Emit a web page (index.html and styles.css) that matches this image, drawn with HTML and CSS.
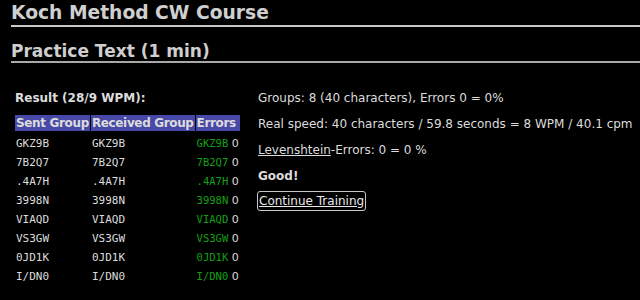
FILE: index.html
```html
<!DOCTYPE html>
<html>
<head>
<meta charset="utf-8">
<link rel="stylesheet" href="styles.css">
</head>
<body>
<div class="page">
  <h1 class="title">Koch Method CW Course</h1>
  <h2 class="subtitle">Practice Text (1 min)</h2>
  <div class="content">
    <div class="left">
      <p class="result">Result (28/9 WPM):</p>
      <table class="groups">
        <thead>
          <tr><th>Sent Group</th><th>Received Group</th><th>Errors</th></tr>
        </thead>
        <tbody>
          <tr class="first"><td class="code">GKZ9B</td><td class="code">GKZ9B</td><td class="err"><span class="ok">GKZ9B</span> 0</td></tr>
          <tr><td class="code">7B2Q7</td><td class="code">7B2Q7</td><td class="err"><span class="ok">7B2Q7</span> 0</td></tr>
          <tr><td class="code">.4A7H</td><td class="code">.4A7H</td><td class="err"><span class="ok">.4A7H</span> 0</td></tr>
          <tr><td class="code">3998N</td><td class="code">3998N</td><td class="err"><span class="ok">3998N</span> 0</td></tr>
          <tr><td class="code">VIAQD</td><td class="code">VIAQD</td><td class="err"><span class="ok">VIAQD</span> 0</td></tr>
          <tr><td class="code">VS3GW</td><td class="code">VS3GW</td><td class="err"><span class="ok">VS3GW</span> 0</td></tr>
          <tr><td class="code">0JD1K</td><td class="code">0JD1K</td><td class="err"><span class="ok">0JD1K</span> 0</td></tr>
          <tr><td class="code">I/DN0</td><td class="code">I/DN0</td><td class="err"><span class="ok">I/DN0</span> 0</td></tr>
        </tbody>
      </table>
    </div>
    <div class="right">
      <p class="line">Groups: 8 (40 characters), Errors 0 = 0%</p>
      <p class="line">Real speed: 40 characters / 59.8 seconds = 8 WPM / 40.1 cpm</p>
      <p class="line"><a class="link" href="#">Levenshtein</a>-Errors: 0 = 0 %</p>
      <p class="line good">Good!</p>
      <p class="line action"><a class="button" href="#">Continue Training</a></p>
    </div>
  </div>
</div>
</body>
</html>
```
FILE: styles.css
```css
html, body {
  margin: 0;
  padding: 0;
  background: #000;
}
body {
  color: #dcdcdc;
  font-family: "DejaVu Sans", Verdana, sans-serif;
  font-size: 12px;
}
.page {
  padding-left: 11px;
  padding-top: 3px;
}
.title {
  margin: 0;
  font-size: 18.7px;
  line-height: 20px;
  font-weight: bold;
  color: #cfcfcf;
  border-bottom: 2px solid #c8c8c8;
  padding-bottom: 2px;
}
.subtitle {
  margin: 14px 0 0 0;
  font-size: 17px;
  line-height: 20px;
  font-weight: bold;
  color: #cfcfcf;
  border-bottom: 2px solid #a8a8a8;
  padding-bottom: 0;
}
.content {
  display: flex;
  padding-top: 28px;
  padding-left: 4px;
}
.left {
  width: 243px;
  flex: none;
}
.result {
  margin: 0 0 10px 0;
  font-weight: bold;
  font-size: 12px;
  line-height: 14px;
}
.groups {
  border-collapse: separate;
  border-spacing: 1px 0;
  margin-left: -1px;
}
.groups th {
  background: #4848a8;
  color: #dcdcdc;
  font-weight: bold;
  font-size: 12px;
  letter-spacing: -0.35px;
  line-height: 16px;
  padding: 0 1px;
  text-align: left;
  white-space: nowrap;
}
.groups td {
  font-size: 11px;
  line-height: 18px;
  padding: 0 1px;
  height: 18px;
}
.groups .first td {
  padding-top: 3px;
}
.code {
  font-family: "DejaVu Sans Mono", "Liberation Mono", monospace;
}
.err {
  text-align: right;
  font-family: "DejaVu Sans", Verdana, sans-serif;
  font-size: 12px;
  white-space: nowrap;
}
.ok {
  color: #14a014;
  font-family: "DejaVu Sans Mono", "Liberation Mono", monospace;
  font-size: 10.5px;
}
.right {
  flex: 1;
}
.line {
  margin: 0 0 12px 0;
  line-height: 14px;
}
.good {
  font-weight: bold;
  margin-bottom: 8px;
}
.link {
  color: #dcdcdc;
  text-decoration: underline;
}
.button {
  display: inline-block;
  color: #e8e8e8;
  text-decoration: underline;
  border: 1px solid #c8c8c8;
  border-radius: 3px;
  padding: 2px 1px 2px 1px;
  margin-left: -1px;
}
```
